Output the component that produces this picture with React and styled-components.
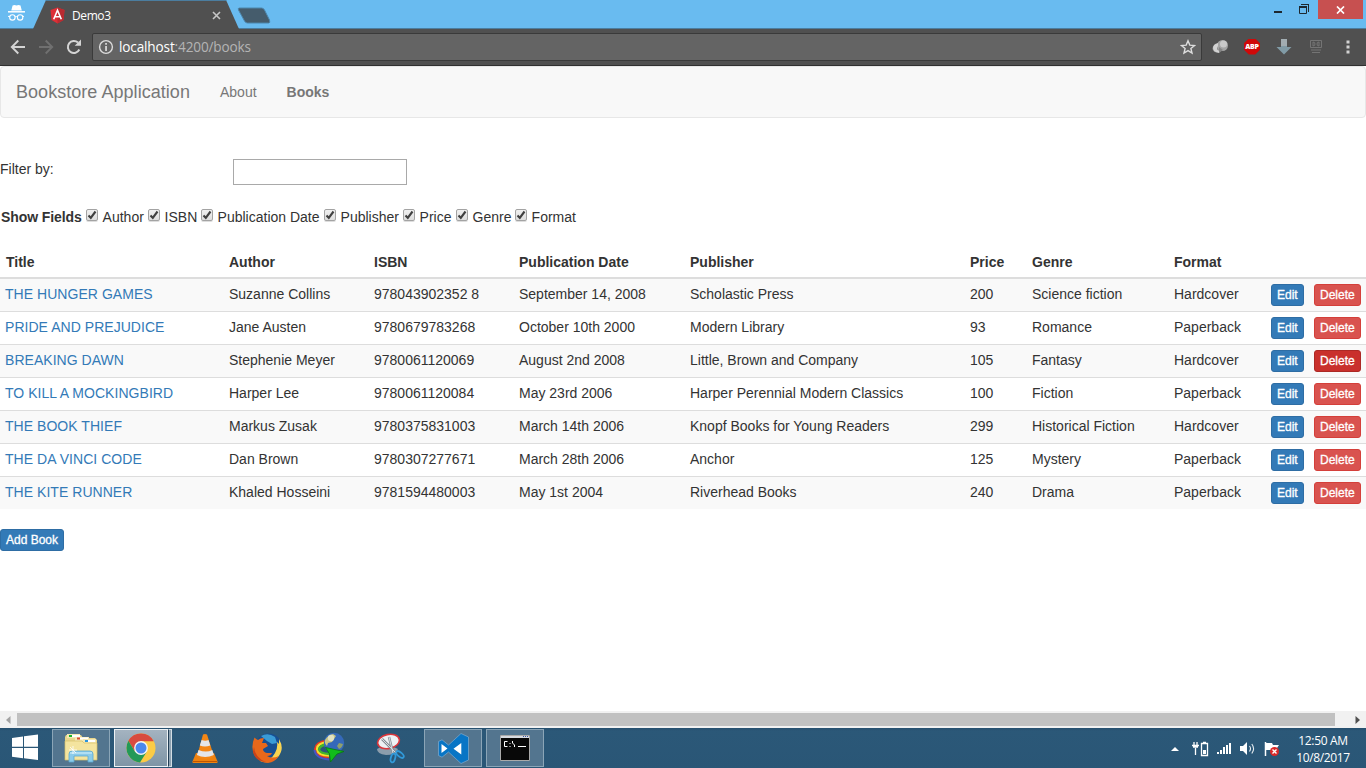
import React from 'react';
import styled, { createGlobalStyle } from 'styled-components';

const GlobalStyle = createGlobalStyle`
  * {
    box-sizing: border-box;
  }

  body {
    margin: 0;
    overflow: hidden;
    background: #ffffff;
  }
`;

const Screen = styled.div`
  display: flex;
  flex-direction: column;
  width: 1366px;
  height: 768px;
  overflow: hidden;
  font-family: 'Liberation Sans', Arial, sans-serif;
  font-size: 14px;
  line-height: 20px;
  color: #333333;

  svg {
    display: block;
    flex: none;
  }
`;

/* ---------- browser ---------- */

const TabStrip = styled.div`
  display: flex;
  align-items: flex-start;
  height: 29px;
  flex: none;
  padding-left: 8px;
  background: #69bbf0;
  box-shadow: inset 0 -1px 0 #4b7d9f;
`;

const Incognito = styled.svg`
  margin: 4px 0 0 0;
`;

const Tab = styled.div`
  display: flex;
  align-items: center;
  gap: 7px;
  width: 206px;
  height: 29px;
  margin-left: 7px;
  padding: 1px 18px 0 17px;
  background: #505050;
  border-top: 1px solid #4b7d9f;
  clip-path: polygon(13px 0, 193px 0, 206px 29px, 0 29px);
`;

const TabTitle = styled.span`
  flex: 1;
  font-family: 'Open Sans', sans-serif;
  font-size: 12px;
  letter-spacing: -0.4px;
  line-height: 16px;
  color: #ffffff;
`;

const NewTab = styled.svg`
  margin: 7px 0 0 -2px;
`;

const WindowButtons = styled.div`
  display: flex;
  align-items: flex-start;
  margin-left: auto;
`;

const CloseButton = styled.div`
  display: flex;
  align-items: center;
  justify-content: center;
  width: 45px;
  height: 19px;
  margin: 0 3px 0 7px;
  background: #c75050;
`;

const Toolbar = styled.div`
  display: flex;
  align-items: center;
  flex: none;
  height: 37px;
  padding: 0 0 1px 10px;
  background: #505050;
  border-bottom: 1px solid #303030;
`;

const AddressBar = styled.div`
  display: flex;
  align-items: center;
  flex: none;
  width: 1110px;
  height: 28px;
  margin: 0 2px 0 10px;
  padding: 0 5px 0 5px;
  background: #646464;
  border: 1px solid #3a3a3a;
  border-radius: 2px;
`;

const Url = styled.span`
  flex: 1;
  margin-left: 5px;
  font-family: 'Open Sans', sans-serif;
  font-size: 13.6px;
  letter-spacing: -0.15px;
  color: #b4b4b4;

  b {
    font-weight: 400;
    color: #ffffff;
  }
`;

const Extensions = styled.div`
  display: grid;
  grid-template-columns: repeat(5, 32px);
  align-items: center;
  justify-items: center;
`;

const Abp = styled.span`
  display: flex;
  align-items: center;
  justify-content: center;
  width: 16px;
  height: 16px;
  background: #d00808;
  clip-path: polygon(30% 0, 70% 0, 100% 30%, 100% 70%, 70% 100%, 30% 100%, 0 70%, 0 30%);
  font-family: 'Open Sans', sans-serif;
  font-weight: 800;
  font-size: 7px;
  letter-spacing: -0.2px;
  color: #ffffff;
`;

/* ---------- page ---------- */

const Page = styled.main`
  flex: 1;
  min-height: 0;
  background: #ffffff;
`;

const Navbar = styled.nav`
  display: flex;
  align-items: center;
  height: 52px;
  padding-left: 15px;
  background: #f8f8f8;
  border: 1px solid #e7e7e7;
  border-radius: 4px;
  color: #777777;
`;

const Brand = styled.span`
  width: 189px;
  font-size: 18px;
  letter-spacing: 0.04px;
`;

const NavItem = styled.span`
  padding: 0 15px;
  font-weight: ${({ $active }) => ($active ? 700 : 400)};
`;

const FilterRow = styled.div`
  display: flex;
  height: 26px;
  margin-top: 41px;
`;

const FilterLabel = styled.label`
  width: 233px;
`;

const FilterInput = styled.input`
  width: 174px;
  height: 26px;
  border: 1px solid #a9a9a9;
`;

const FieldRow = styled.div`
  display: flex;
  height: 20px;
  margin-top: 22px;
  padding-left: 1px;
`;

const FieldTitle = styled.b`
  width: 85px;
  letter-spacing: -0.1px;
`;

const Field = styled.label`
  display: flex;
  width: ${({ $width }) => $width}px;
  white-space: nowrap;
`;

const CheckBox = styled.span`
  width: 12px;
  height: 12px;
  flex: none;
  margin: 2px 4.6px 0 0;
  border: 1px solid #a3a3a3;
  border-radius: 2px;
  background: linear-gradient(#f0f0f0, #dedede);
  box-shadow: 0 1px 0 #dddddd;
`;

const Table = styled.table`
  width: 1366px;
  margin-top: 20px;
  table-layout: fixed;
  border-collapse: separate;
  border-spacing: 0;
`;

const HeadCell = styled.th`
  height: 32px;
  padding: 5px 5px 5px ${({ $indent }) => $indent || 5}px;
  border-bottom: 2px solid #dddddd;
  text-align: left;
  font-weight: 700;
`;

const Row = styled.tr`
  height: 33px;

  &:nth-child(odd) {
    background: #f9f9f9;
  }

  &:first-child {
    height: 32px;
  }

  &:first-child td {
    border-top: 0;
  }
`;

const Cell = styled.td`
  padding: 5px;
  border-top: 1px solid #dddddd;
  vertical-align: top;
  white-space: nowrap;
`;

const BookLink = styled.a`
  color: #337ab7;
  letter-spacing: 0.04px;
`;

const buttonColors = {
  primary: ['#337ab7', '#2e6da4'],
  danger: ['#d9534f', '#d43f3a'],
  pressed: ['#c9302c', '#ac2925'],
};

const Button = styled.button`
  display: block;
  height: 22px;
  padding: 1px 5px;
  border: 1px solid ${({ $kind }) => buttonColors[$kind][1]};
  border-radius: 3px;
  background: ${({ $kind }) => buttonColors[$kind][0]};
  color: #ffffff;
  font-family: inherit;
  font-size: 12px;
  line-height: 18px;
  -webkit-text-stroke: 0.3px #ffffff;
`;

const AddRow = styled.div`
  margin-top: 20px;
`;

const ScrollBar = styled.div`
  display: flex;
  align-items: center;
  flex: none;
  height: 17px;
  padding-left: 6px;
  background: #f1f1f1;
`;

const Thumb = styled.div`
  width: 1318px;
  height: 13px;
  margin: 0 20px 0 6px;
  background: #c1c1c1;
`;

/* ---------- taskbar ---------- */

const Taskbar = styled.footer`
  display: flex;
  flex: none;
  height: 40px;
  background: linear-gradient(#264f6e, #2b5878 3px, #2a5676);
`;

const StartButton = styled.div`
  width: 52px;
  padding: 6px 0 0 11px;
`;

const TaskButton = styled.div`
  display: flex;
  align-items: center;
  justify-content: center;
  width: 58px;
  height: 38px;
  margin: 1px 4px 0 0;
  border: 1px solid ${({ $state }) => ({ active: '#edf2f5', open: '#8ba5b7' }[$state] || 'transparent')};
  background: ${({ $state }) => ({ active: 'linear-gradient(#a4b3c0, #7f95a6)', open: '#53758f' }[$state] || 'none')};
`;

const Stacked = styled.div`
  display: flex;
  width: 62px;

  ${TaskButton} {
    width: 54px;
    margin-right: 0;
  }
`;

const StackEdge = styled.div`
  width: 4px;
  height: 38px;
  margin-top: 1px;
  background: #8ca1b1;
  border: 1px solid #d3dde4;
  border-left: 1px solid #223e55;
`;

const Tray = styled.div`
  display: flex;
  align-items: center;
  margin-left: auto;
  padding-top: 2px;
`;

const Clock = styled.div`
  width: 78px;
  margin-top: -1px;
  padding-right: 8px;
  text-align: center;
  font-family: 'Open Sans', sans-serif;
  font-size: 12px;
  letter-spacing: -0.35px;
  line-height: 17px;
  color: #ffffff;
`;

const books = [
  ['THE HUNGER GAMES', 'Suzanne Collins', '978043902352 8', 'September 14, 2008', 'Scholastic Press', '200', 'Science fiction', 'Hardcover'],
  ['PRIDE AND PREJUDICE', 'Jane Austen', '9780679783268', 'October 10th 2000', 'Modern Library', '93', 'Romance', 'Paperback'],
  ['BREAKING DAWN', 'Stephenie Meyer', '9780061120069', 'August 2nd 2008', 'Little, Brown and Company', '105', 'Fantasy', 'Hardcover'],
  ['TO KILL A MOCKINGBIRD', 'Harper Lee', '9780061120084', 'May 23rd 2006', 'Harper Perennial Modern Classics', '100', 'Fiction', 'Paperback'],
  ['THE BOOK THIEF', 'Markus Zusak', '9780375831003', 'March 14th 2006', 'Knopf Books for Young Readers', '299', 'Historical Fiction', 'Hardcover'],
  ['THE DA VINCI CODE', 'Dan Brown', '9780307277671', 'March 28th 2006', 'Anchor', '125', 'Mystery', 'Paperback'],
  ['THE KITE RUNNER', 'Khaled Hosseini', '9781594480003', 'May 1st 2004', 'Riverhead Books', '240', 'Drama', 'Paperback'],
];

const columns = ['Title', 'Author', 'ISBN', 'Publication Date', 'Publisher', 'Price', 'Genre', 'Format', '', ''];
const widths = [224, 145, 145, 171, 280, 62, 142, 97, 43, 57];

const fields = [
  ['Author', 62],
  ['ISBN', 53],
  ['Publication Date', 123],
  ['Publisher', 79],
  ['Price', 53],
  ['Genre', 59],
  ['Format', 62],
];

const BrowserChrome = () => (
  <>
    <TabStrip>
      <Incognito width="18" height="18" viewBox="0 0 18 18">
        <path d="M4.6 1.5 6.5 1l2 .6 2-.6 2 .5 1.3 5H3.3z" fill="#fff" />
        <path d="M0 7.8h17" stroke="#fff" strokeWidth="1.5" />
        <circle cx="4.4" cy="13.4" r="2.7" fill="none" stroke="#fff" strokeWidth="1.1" />
        <circle cx="12.1" cy="13.4" r="2.7" fill="none" stroke="#fff" strokeWidth="1.1" />
        <path d="M7 13q1.3-1 2.6 0M0 12.4h2M14.8 12.4H16" fill="none" stroke="#fff" />
      </Incognito>
      <Tab>
        <svg width="15" height="17" viewBox="0 0 15 17">
          <path d="M7.5.5 14.5 3l-1 10-6 3.5-6-3.5L.5 3z" fill="#dd2f36" />
          <path d="M7.5.5 14.5 3l-1 10-6 3.5z" fill="#b92b30" />
          <path d="m3.7 12.2 3.8-9 3.8 9M5 9.8h5" fill="none" stroke="#fff" strokeWidth="1.6" />
        </svg>
        <TabTitle>Demo3</TabTitle>
        <svg width="9" height="9" viewBox="0 0 9 9">
          <path d="m1 1 7 7M8 1 1 8" stroke="#c6c6c6" strokeWidth="1.6" />
        </svg>
      </Tab>
      <NewTab width="34" height="17" viewBox="0 0 34 17">
        <path d="M2.5 1h22q2 0 3 2l5 10q1 3-1 3h-21q-2 0-3-2L1.500 3q-1-2 1-2z" fill="#455c6c" stroke="#4d86ab" />
      </NewTab>
      <WindowButtons>
        <svg width="46" height="19" viewBox="0 0 46 19">
          <path d="M9 11h8v2H9z" fill="#1d2830" />
          <path d="M34.500 6.500h7v7h-7z" fill="none" stroke="#1d2830" />
          <path d="M34 6h8v2h-8zM36 4h8v1h-8zM43 4h1v8h-1z" fill="#1d2830" />
        </svg>
        <CloseButton>
          <svg width="9" height="8" viewBox="0 0 9 8">
            <path d="m1 .5 7 7M8 .5l-7 7" stroke="#fff" strokeWidth="1.7" />
          </svg>
        </CloseButton>
      </WindowButtons>
    </TabStrip>
    <Toolbar>
      <svg width="72" height="18" viewBox="0 0 72 18">
        <path d="M15 9H2M8.300 2.500 1.800 9l6.500 6.500" fill="none" stroke="#d4d4d4" strokeWidth="1.9" />
        <path d="M29 9h13M35.700 2.500 42.200 9l-6.500 6.500" fill="none" stroke="#707070" strokeWidth="1.9" />
        <path d="M69.300 11.500A6 6 0 1 1 68 4.600" fill="none" stroke="#d4d4d4" strokeWidth="2" />
        <path d="M71 1.500v6.300h-6.300z" fill="#d4d4d4" />
      </svg>
      <AddressBar>
        <svg width="16" height="16" viewBox="0 0 16 16">
          <circle cx="8" cy="8" r="6.400" fill="none" stroke="#dcdcdc" strokeWidth="1.400" />
          <path d="M7.200 4h1.700v1.700H7.200zM7.200 7h1.700v5H7.200z" fill="#dcdcdc" />
        </svg>
        <Url>
          <b>localhost</b>:4200/books
        </Url>
        <svg width="16" height="16" viewBox="0 0 16 16">
          <path d="m8 1.800 1.800 4.300 4.700.4-3.600 3 1.100 4.500-4-2.400-4 2.400 1.100-4.500-3.600-3 4.700-.4z" fill="none" stroke="#dedede" strokeWidth="1.400" />
        </svg>
      </AddressBar>
      <Extensions>
        <svg width="17" height="16" viewBox="0 0 17 16">
          <ellipse cx="5" cy="9.500" rx="4.500" ry="4" fill="#8f8f8f" />
          <circle cx="10.500" cy="6.500" r="5.500" fill="#a5a5a5" />
          <circle cx="11.500" cy="5" r="3.500" fill="#c9c9c9" />
          <path d="M6 4Q1 5 1 9t6 5l1-2Q3 11 6 7z" fill="#d2d2d2" />
          <path d="m7 8 4 3-4 3z" fill="#858585" />
        </svg>
        <Abp>ABP</Abp>
        <svg width="16" height="16" viewBox="0 0 16 16">
          <path d="M5 0h6v8h4.500L8 15.500.5 8H5z" fill="#819ba6" />
          <path d="M5 0h6v7H5z" fill="#a2adb2" />
        </svg>
        <svg width="12" height="14" viewBox="0 0 12 14">
          <path d="M.5.5h11v7H.5zM3 2v4q2 0 2-2T3 2zM9 2v4Q7 6 7 4t2-2zM1 10h10M2 12.500h8" fill="none" stroke="#747474" />
        </svg>
        <svg width="4" height="14" viewBox="0 0 4 14">
          <path d="M.5.500h3v3h-3zM.5 5.500h3v3h-3zM.5 10.500h3v3h-3z" fill="#d2d2d2" />
        </svg>
      </Extensions>
    </Toolbar>
  </>
);

const ExplorerIcon = () => (
  <svg width="34" height="32" viewBox="0 0 34 32">
    <path d="M2 3h15l2 3h12l2 2v20H1V5z" fill="#e9d68c" />
    <path d="M3 2h13v4H3z" fill="#f5e9b5" />
    <path d="M5 3h3v2H5z" fill="#18b52b" />
    <path d="M8 3h8v2H8z" fill="#fff" />
    <path d="M11 5h14v4H11z" fill="#f5e9b5" />
    <path d="M13 5.500h3v2h-3z" fill="#d84b32" />
    <path d="M16 5.500h8v2h-8z" fill="#fff" />
    <path d="M19 7h13v4H19z" fill="#f5e9b5" />
    <path d="M21 8h3v2h-3z" fill="#2b94dc" />
    <path d="M24 8h7v2h-7z" fill="#fff" />
    <path d="M1 9h17l2 2h13v17H1z" fill="#f4e49f" stroke="#d6bf67" strokeWidth=".7" />
    <path d="M5 30v-8q0-3 3-3h18q3 0 3 3v8h-5v-6H10v6z" fill="#8bcbea" stroke="#5ca8d0" strokeWidth=".8" />
    <path d="M6 21h22" stroke="#d7f2fc" />
    <path d="M9 14v8M5 18h8M6 15l6 6" stroke="#fff" strokeWidth=".8" />
  </svg>
);

const ChromeIcon = () => (
  <svg width="30" height="30" viewBox="0 0 30 30">
    <circle cx="15" cy="15" r="14.500" fill="#fccb45" />
    <path d="M2.400 7.800A14.500 14.500 0 0 1 27.800 8.300H15L8.900 18.500z" fill="#d84b3f" />
    <path d="M2.400 7.800A14.500 14.500 0 0 0 14 29.500L20.900 18.500H8.900z" fill="#239957" />
    <circle cx="15" cy="15" r="6.900" fill="#f4f4f4" />
    <circle cx="15" cy="15" r="5.500" fill="#4a88ee" />
  </svg>
);

const VlcIcon = () => (
  <svg width="28" height="31" viewBox="0 0 28 31">
    <path d="M5 20h18l3.500 8.500q.5 1.500-1 1.500h-23Q1 30 1.500 28.500z" fill="#f0820e" />
    <path d="M12 1.500q2-1 4 0l7 22q-8 5-17 0z" fill="#f38615" />
    <path d="m10.600 7-1.800 5.500q5 2 10.500 0L17.500 7q-3 1.500-6.900 0zM7.500 17l-1.600 5q8 4 17 0l-1.600-5q-6 3-13.800 0z" fill="#e4e6e9" />
    <path d="M2 28.500h24" stroke="#bd5602" />
  </svg>
);

const FirefoxIcon = () => (
  <svg width="31" height="31" viewBox="0 0 31 31">
    <circle cx="16.500" cy="14" r="13.600" fill="#174f92" />
    <path d="M9 3q7-4 14 1l2 6-5 1-5-3z" fill="#3a9bd5" />
    <path d="M27 6q6 10-1 18-8 8-18 4 11 0 15-8 3-5 2-11l2 2z" fill="#f9d44f" />
    <path d="M2.500 4.500Q-2 15 3 23q5 7 13 7 7-1 11-7-7 3-12 0 4 0 5-3l-5 0q-4-1-4-4l5-3-2-3-4 0 2-5q-4 0-6 2-2-1-3.500-2.500z" fill="#e8681b" />
    <path d="M2 14q1 11 12 15Q3 28 1 19z" fill="#c8431a" />
  </svg>
);

const IdmIcon = () => (
  <svg width="32" height="32" viewBox="0 0 32 32">
    <path d="M14 8.500Q2.500 10 2 17q1 8 14 8.500" fill="none" stroke="#e93822" strokeWidth="2" />
    <path d="M14 10.500Q4.500 11 4 17q1 6.500 12 6.500" fill="none" stroke="#f5df2c" strokeWidth="2.300" />
    <path d="M14 12.500Q7 13 6 17.500q1 4 10 4.500" fill="none" stroke="#42b52c" strokeWidth="2.300" />
    <path d="M1.500 18q1 8.500 14.500 9.500" fill="none" stroke="#4a55c4" strokeWidth="2" />
    <circle cx="21" cy="11" r="10.200" fill="#3569b9" />
    <path d="M12 8q3-5 8-6l3 2-2 3-2 3-4 1-1 3q-3-3-2-6z" fill="#c9c583" />
    <path d="m26 11 4 1q-1 4-4 5l-2-3z" fill="#8fa06d" />
    <circle cx="18" cy="6" r="3.200" fill="#eef0dc" opacity=".7" />
    <path d="m12.500 15.500 18.500 4-7 2.500-6.500 8-1-8z" fill="#11bd1a" stroke="#087710" strokeWidth=".8" />
  </svg>
);

const SnipIcon = () => (
  <svg width="31" height="31" viewBox="0 0 31 31">
    <path d="M1 16q10-7 21 0-3 6-12 6-9-1-9-6z" fill="#8c9dac" />
    <ellipse cx="12.500" cy="8.500" rx="11" ry="7" transform="rotate(-12 12.500 8.500)" fill="#eef1f4" stroke="#d9363c" strokeWidth="1.600" />
    <path d="m6 6 14 14M13 4l4 16" stroke="#858d95" strokeWidth="2.500" />
    <path d="m6 6 14 14M13 4l4 16" stroke="#d9dde0" strokeWidth="1" />
    <ellipse cx="17" cy="25" rx="2.200" ry="4.500" transform="rotate(15 17 25)" fill="none" stroke="#3199d9" strokeWidth="1.800" />
    <ellipse cx="24" cy="21.500" rx="2.200" ry="4.500" transform="rotate(-50 24 21.500)" fill="none" stroke="#3199d9" strokeWidth="1.800" />
  </svg>
);

const CodeIcon = () => (
  <svg width="31" height="31" viewBox="0 0 31 31">
    <path d="M23 .5 10.500 12 4 6.800.5 8.500v14L4 24.200l6.500-5.200L23 30.500l7.500-3.500V4z" fill="#0875c5" stroke="#8fb6d3" strokeWidth=".6" />
    <path d="m3.500 11 6 4.500-6 4.500zM23.300 10v11.500l-7.800-5.800z" fill="#fff" />
  </svg>
);

const ConsoleIcon = () => (
  <svg width="30" height="26" viewBox="0 0 30 26">
    <path d="M.5.500h29v25H.5z" fill="#080808" stroke="#aaa" />
    <path d="M1 1h28v2H1z" fill="#d8dbe0" />
    <path d="M23 1h1v1h-1zM25 1h1v1h-1zM27 1h1v1h-1z" fill="#3a55a4" />
    <path d="M7.500 6.500h-3v5h3M10 8v1M10 11v1M12.500 6v2l2 2v2M18 11.500h8" fill="none" stroke="#fff" />
  </svg>
);

const TrayIcons = () => (
  <svg width="120" height="20" viewBox="0 0 120 20">
    <path d="m3 12 4-4 4 4z" fill="#fff" />
    <path d="M26 3v3M29 3v3M24 6.500h7M25 8h5M27.500 9v7M33.500 4.500h6v12h-6zM35 3.500h3" fill="none" stroke="#fff" strokeWidth="1.300" />
    <path d="M35 11h3v4h-3z" fill="#fff" />
    <path d="M49 13h2v2h-2zM52 11h2v4h-2zM55 8h2v7h-2zM58 6h2v9h-2zM61 4h2v11h-2z" fill="#fff" />
    <path d="M72 7h3l4-4v13l-4-4h-3z" fill="#fff" />
    <path d="M81.500 7q2 2.500 0 5.500M83.800 5q3.500 4.500 0 9.500" fill="none" stroke="#e8eef2" strokeWidth="1.100" />
    <path d="M97.500 3v14" stroke="#fff" strokeWidth="1.500" />
    <path d="M98 4h6l1 2h6l-2 3v4h-4l-1-2h-6z" fill="#fff" />
    <circle cx="106.500" cy="12.500" r="4.500" fill="#da2929" />
    <path d="m104.500 10.500 4 4M108.500 10.500l-4 4" stroke="#fff" strokeWidth="1.400" />
  </svg>
);

const App = () => {
  return (
    <Screen>
      <GlobalStyle />
      <BrowserChrome />
      <Page>
        <Navbar>
          <Brand>Bookstore Application</Brand>
          <NavItem>About</NavItem>
          <NavItem $active>Books</NavItem>
        </Navbar>
        <FilterRow>
          <FilterLabel>Filter by:</FilterLabel>
          <FilterInput />
        </FilterRow>
        <FieldRow>
          <FieldTitle>Show Fields</FieldTitle>
          {fields.map(([name, width]) => (
            <Field key={name} $width={width}>
              <CheckBox>
                <svg width="10" height="10" viewBox="0 0 10 10">
                  <path d="m1.500 5.500 2.300 2.300 4.700-6.300" fill="none" stroke="#404040" strokeWidth="2.100" />
                </svg>
              </CheckBox>
              {name}
            </Field>
          ))}
        </FieldRow>
        <Table>
          <colgroup>
            {widths.map((width, i) => (
              <col key={i} width={width} />
            ))}
          </colgroup>
          <thead>
            <tr>
              {columns.map((name, i) => (
                <HeadCell key={i} $indent={i === 0 ? 6 : 5}>{name}</HeadCell>
              ))}
            </tr>
          </thead>
          <tbody>
            {books.map(([title, ...rest], i) => (
              <Row key={title}>
                <Cell>
                  <BookLink>{title}</BookLink>
                </Cell>
                {rest.map((value) => (
                  <Cell key={value}>{value}</Cell>
                ))}
                <Cell>
                  <Button $kind="primary">Edit</Button>
                </Cell>
                <Cell>
                  <Button $kind={i === 2 ? 'pressed' : 'danger'}>Delete</Button>
                </Cell>
              </Row>
            ))}
          </tbody>
        </Table>
        <AddRow>
          <Button $kind="primary">Add Book</Button>
        </AddRow>
      </Page>
      <ScrollBar>
        <svg width="5" height="8" viewBox="0 0 5 8">
          <path d="M4.500 0v8L0 4z" fill="#a3a3a3" />
        </svg>
        <Thumb />
        <svg width="5" height="8" viewBox="0 0 5 8">
          <path d="M.5 0v8L5 4z" fill="#505050" />
        </svg>
      </ScrollBar>
      <Taskbar>
        <StartButton>
          <svg width="28" height="27" viewBox="0 0 28 27">
            <path d="m1 4 11-1.500v10.300H1zM13 2.300 27 .5v12.300H13zM1 14h11v10.300L1 22.800zM13 14h14v12l-14-1.700z" fill="#fff" />
          </svg>
        </StartButton>
        <TaskButton $state="open"><ExplorerIcon /></TaskButton>
        <Stacked>
          <TaskButton $state="active"><ChromeIcon /></TaskButton>
          <StackEdge />
        </Stacked>
        <TaskButton><VlcIcon /></TaskButton>
        <TaskButton><FirefoxIcon /></TaskButton>
        <TaskButton><IdmIcon /></TaskButton>
        <TaskButton><SnipIcon /></TaskButton>
        <TaskButton $state="open"><CodeIcon /></TaskButton>
        <TaskButton $state="open"><ConsoleIcon /></TaskButton>
        <Tray>
          <TrayIcons />
          <Clock>
            12:50 AM
            <br />
            10/8/2017
          </Clock>
        </Tray>
      </Taskbar>
    </Screen>
  );
};

export default App;
